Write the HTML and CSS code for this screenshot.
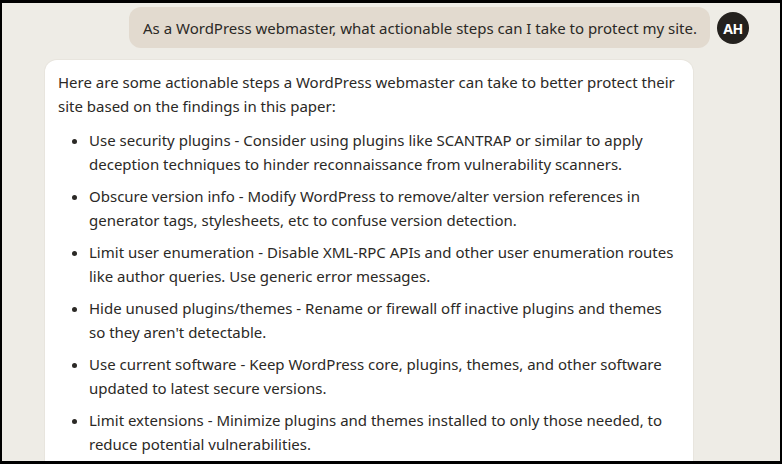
FILE: index.html
```html
<!DOCTYPE html>
<html lang="en">
<head>
<meta charset="utf-8">
<title>Chat</title>
<link rel="stylesheet" href="styles.css">
</head>
<body>
<div class="frame">
  <div class="user-row">
    <div class="user-bubble">As a WordPress webmaster, what actionable steps can I take to protect my site.</div>
    <div class="avatar">AH</div>
  </div>
  <div class="reply">
    <p class="intro">Here are some actionable steps a WordPress webmaster can take to better protect their site based on the findings in this paper:</p>
    <ul class="steps">
      <li>Use security plugins - Consider using plugins like SCANTRAP or similar to apply deception techniques to hinder reconnaissance from vulnerability scanners.</li>
      <li>Obscure version info - Modify WordPress to remove/alter version references in generator tags, stylesheets, etc to confuse version detection.</li>
      <li>Limit user enumeration - Disable XML-RPC APIs and other user enumeration routes like author queries. Use generic error messages.</li>
      <li>Hide unused plugins/themes - Rename or firewall off inactive plugins and themes so they aren't detectable.</li>
      <li>Use current software - Keep WordPress core, plugins, themes, and other software updated to latest secure versions.</li>
      <li>Limit extensions - Minimize plugins and themes installed to only those needed, to reduce potential vulnerabilities.</li>
    </ul>
  </div>
</div>
</body>
</html>
```

FILE: styles.css
```css
html, body {
  margin: 0;
  padding: 0;
  background: #000;
}
.frame {
  box-sizing: border-box;
  width: 782px;
  height: 464px;
  border-style: solid;
  border-color: #000;
  border-width: 3px 2px 3px 2px;
  background: #eeece6;
  overflow: hidden;
  font-family: "Noto Sans", "Open Sans", sans-serif;
  font-size: 15px;
  color: #2b2926;
}
.user-row {
  display: flex;
  justify-content: flex-end;
  align-items: flex-start;
  gap: 7px;
  padding: 4px 31px 0 0;
}
.user-bubble {
  height: 41px;
  display: flex;
  align-items: center;
  padding: 0 13px 0 14px;
  background: #e2dacf;
  border-radius: 12px;
}
.avatar {
  width: 32px;
  height: 32px;
  margin-top: 5px;
  border-radius: 50%;
  background: #24211e;
  color: #fff;
  font-weight: 700;
  font-size: 14px;
  display: flex;
  align-items: center;
  justify-content: center;
  letter-spacing: -0.5px;
}
.reply {
  margin: 12px 0 0 43px;
  width: 648px;
  box-sizing: border-box;
  background: #fff;
  border-radius: 12px;
  padding: 10px 13px 20px 13px;
  box-shadow: 0 0 0 1px #e8e5de;
}
.intro {
  margin: 0;
  line-height: 24px;
}
.steps {
  margin: 10px 0 0 0;
  padding-left: 31px;
  line-height: 24px;
}
.steps li {
  margin-bottom: 8px;
}
```
